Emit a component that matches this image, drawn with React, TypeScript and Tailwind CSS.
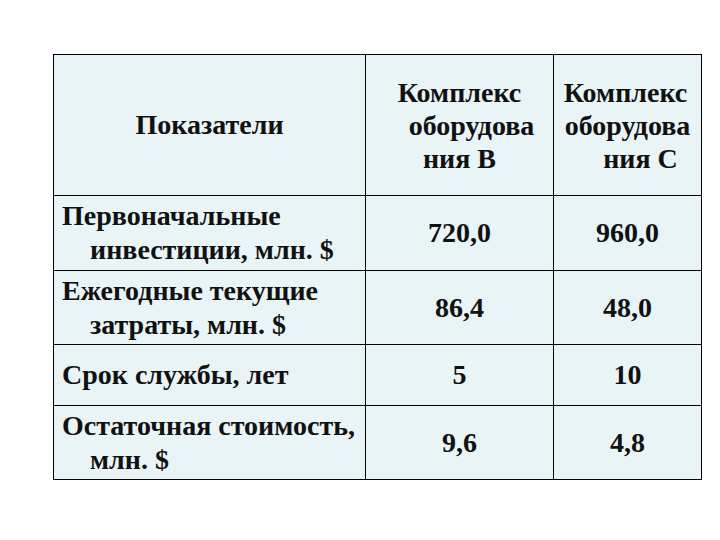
import React from "react";

const cell = "border-r border-b border-black bg-[#e9f4f6] flex items-center";

export default function App() {
  const rows: { label: string[]; b: string; c: string; h: string }[] = [
    { label: ["Первоначальные", "инвестиции, млн. $"], b: "720,0", c: "960,0", h: "h-[75px]" },
    { label: ["Ежегодные текущие", "затраты, млн. $"], b: "86,4", c: "48,0", h: "h-[74px]" },
    { label: ["Срок службы, лет"], b: "5", c: "10", h: "h-[61px]" },
    { label: ["Остаточная стоимость,", "млн. $"], b: "9,6", c: "4,8", h: "h-[74px]" },
  ];
  return (
    <div
      className="w-[720px] h-[540px] bg-white pt-[54px] pl-[53px] text-[#111] font-bold text-[28px] leading-[34px]"
      style={{ fontFamily: "'Liberation Serif', 'Times New Roman', serif" }}
    >
      <div className="grid grid-cols-[312px_188px_148px] w-[649px] border-l border-t border-black">
        <div className={`${cell} h-[141px] justify-center`}>Показатели</div>
        <div className={`${cell} h-[141px] flex-col justify-center leading-[33px]`}>
          <div className="w-full text-center whitespace-nowrap">Комплекс</div>
          <div className="w-full text-center whitespace-nowrap pl-[24px]">оборудова</div>
          <div className="w-full text-center whitespace-nowrap">ния В</div>
        </div>
        <div className={`${cell} h-[141px] flex-col justify-center leading-[33px]`}>
          <div className="w-full text-center whitespace-nowrap pr-[4px]">Комплекс</div>
          <div className="w-full text-center whitespace-nowrap">оборудова</div>
          <div className="w-full text-center whitespace-nowrap pl-[26px]">ния С</div>
        </div>
        {rows.map((r, i) => (
          <React.Fragment key={i}>
            <div className={`${cell} ${r.h} pl-[8px]`}>
              <div>
                {r.label.map((l, j) => (
                  <div key={j} className={j > 0 ? "pl-[28px] whitespace-nowrap" : "whitespace-nowrap"}>
                    {l}
                  </div>
                ))}
              </div>
            </div>
            <div className={`${cell} ${r.h} justify-center`}>{r.b}</div>
            <div className={`${cell} ${r.h} justify-center`}>{r.c}</div>
          </React.Fragment>
        ))}
      </div>
    </div>
  );
}
